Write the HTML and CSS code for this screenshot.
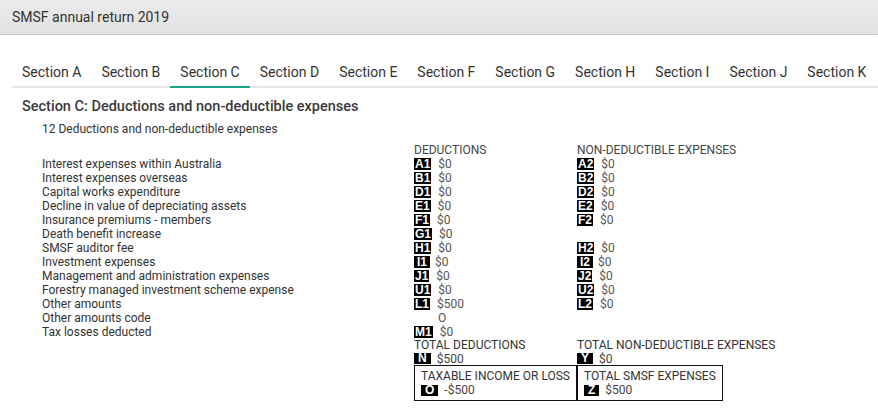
FILE: index.html
```html
<!DOCTYPE html>
<html lang="en">
<head>
<meta charset="utf-8">
<title>SMSF annual return 2019</title>
<link rel="stylesheet" href="styles.css">
</head>
<body>
<header class="topbar">SMSF annual return 2019</header>
<nav class="tabs">
  <div class="tab">Section A</div>
  <div class="tab">Section B</div>
  <div class="tab active">Section C</div>
  <div class="tab">Section D</div>
  <div class="tab">Section E</div>
  <div class="tab">Section F</div>
  <div class="tab">Section G</div>
  <div class="tab">Section H</div>
  <div class="tab">Section I</div>
  <div class="tab">Section J</div>
  <div class="tab">Section K</div>
</nav>
<h1 class="heading">Section C: Deductions and non-deductible expenses</h1>
<h2 class="subheading">12 Deductions and non-deductible expenses</h2>
<div class="grid">
  <div></div><div class="colhead">DEDUCTIONS</div><div class="colhead">NON-DEDUCTIBLE EXPENSES</div>

  <div class="label">Interest expenses within Australia</div>
  <div class="cell"><span class="code">A1</span><span class="val">$0</span></div>
  <div class="cell"><span class="code">A2</span><span class="val">$0</span></div>

  <div class="label">Interest expenses overseas</div>
  <div class="cell"><span class="code">B1</span><span class="val">$0</span></div>
  <div class="cell"><span class="code">B2</span><span class="val">$0</span></div>

  <div class="label">Capital works expenditure</div>
  <div class="cell"><span class="code">D1</span><span class="val">$0</span></div>
  <div class="cell"><span class="code">D2</span><span class="val">$0</span></div>

  <div class="label">Decline in value of depreciating assets</div>
  <div class="cell"><span class="code">E1</span><span class="val">$0</span></div>
  <div class="cell"><span class="code">E2</span><span class="val">$0</span></div>

  <div class="label">Insurance premiums - members</div>
  <div class="cell"><span class="code">F1</span><span class="val">$0</span></div>
  <div class="cell"><span class="code">F2</span><span class="val">$0</span></div>

  <div class="label">Death benefit increase</div>
  <div class="cell"><span class="code">G1</span><span class="val">$0</span></div>
  <div class="cell"></div>

  <div class="label">SMSF auditor fee</div>
  <div class="cell"><span class="code">H1</span><span class="val">$0</span></div>
  <div class="cell"><span class="code">H2</span><span class="val">$0</span></div>

  <div class="label">Investment expenses</div>
  <div class="cell"><span class="code narrow">I1</span><span class="val">$0</span></div>
  <div class="cell"><span class="code narrow">I2</span><span class="val">$0</span></div>

  <div class="label">Management and administration expenses</div>
  <div class="cell"><span class="code">J1</span><span class="val">$0</span></div>
  <div class="cell"><span class="code">J2</span><span class="val">$0</span></div>

  <div class="label">Forestry managed investment scheme expense</div>
  <div class="cell"><span class="code">U1</span><span class="val">$0</span></div>
  <div class="cell"><span class="code">U2</span><span class="val">$0</span></div>

  <div class="label">Other amounts</div>
  <div class="cell"><span class="code">L1</span><span class="val">$500</span></div>
  <div class="cell"><span class="code">L2</span><span class="val">$0</span></div>

  <div class="label">Other amounts code</div>
  <div class="cell"><span class="val indent">O</span></div>
  <div class="cell"></div>

  <div class="label">Tax losses deducted</div>
  <div class="cell"><span class="code">M1</span><span class="val">$0</span></div>
  <div class="cell"></div>

  <div></div><div class="total-head">TOTAL DEDUCTIONS</div><div class="total-head">TOTAL NON-DEDUCTIBLE EXPENSES</div>
  <div></div>
  <div class="cell"><span class="code wide">N</span><span class="val dark">$500</span></div>
  <div class="cell"><span class="code wide">Y</span><span class="val dark">$0</span></div>

  <div></div>
  <div class="boxes">
    <div class="box">
      <div class="box-title">TAXABLE INCOME OR LOSS</div>
      <div class="box-row"><span class="code wide">O</span><span class="val dark">-$500</span></div>
    </div>
    <div class="box">
      <div class="box-title">TOTAL SMSF EXPENSES</div>
      <div class="box-row"><span class="code wide">Z</span><span class="val dark">$500</span></div>
    </div>
  </div>
</div>
</body>
</html>
```

FILE: styles.css
```css
html, body {
  margin: 0;
  padding: 0;
  background: #ffffff;
}
body {
  font-family: Roboto, "Liberation Sans", Arial, sans-serif;
  color: #333333;
}
.topbar {
  height: 34px;
  line-height: 34px;
  padding-left: 12px;
  font-size: 14px;
  color: #333333;
  background: linear-gradient(#ebebeb, #e1e1e1);
  border-bottom: 1px solid #c9c9c9;
}
.tabs {
  display: flex;
  margin: 27px 0 0 12px;
  border-bottom: 2px solid #e6e6e6;
}
.tab {
  padding: 0 10px 4px;
  line-height: 20px;
  font-size: 14px;
  color: #333333;
  white-space: nowrap;
}
.tab.active {
  border-bottom: 2px solid #19a689;
  margin-bottom: -2px;
}
.heading {
  margin: 9px 0 0 22px;
  font-size: 14.5px;
  font-weight: 500;
  line-height: 20px;
  color: #3a3a3a;
}
.subheading {
  margin: 4px 0 0 42px;
  font-size: 12px;
  font-weight: 400;
  line-height: 16px;
  color: #333333;
}
.grid {
  display: grid;
  grid-template-columns: 372px 163px 1fr;
  grid-template-rows: repeat(14, 14px) 13px 13px 38px;
  margin: 6px 0 0 42px;
  font-size: 12px;
  line-height: 14px;
}
.colhead {
  color: #444444;
  white-space: nowrap;
}
.label {
  color: #333333;
  white-space: nowrap;
}
.cell, .box-row {
  display: flex;
  align-items: center;
  white-space: nowrap;
}
.code {
  display: inline-block;
  background: #000000;
  color: #ffffff;
  font-family: "Liberation Sans", Arial, sans-serif;
  font-weight: 700;
  font-size: 12px;
  line-height: 12px;
  padding: 0 1px;
  margin-right: 7px;
}
.code.narrow {
  padding: 0 3px;
  margin-right: 5px;
}
.code.wide {
  padding: 0 4px;
  line-height: 11px;
  margin-right: 6px;
}
.val {
  color: #555555;
}
.val.dark {
  color: #444444;
}
.val.indent {
  margin-left: 24px;
}
.total-head {
  color: #333333;
  white-space: nowrap;
  line-height: 12px;
}
.boxes {
  grid-column: 2 / 4;
  display: flex;
  align-items: flex-start;
}
.box {
  border: 1px solid #111111;
  padding: 3px 6px 3px;
}
.box-title {
  line-height: 14px;
  color: #333333;
  white-space: nowrap;
}
.box-row {
  height: 14px;
}
```
